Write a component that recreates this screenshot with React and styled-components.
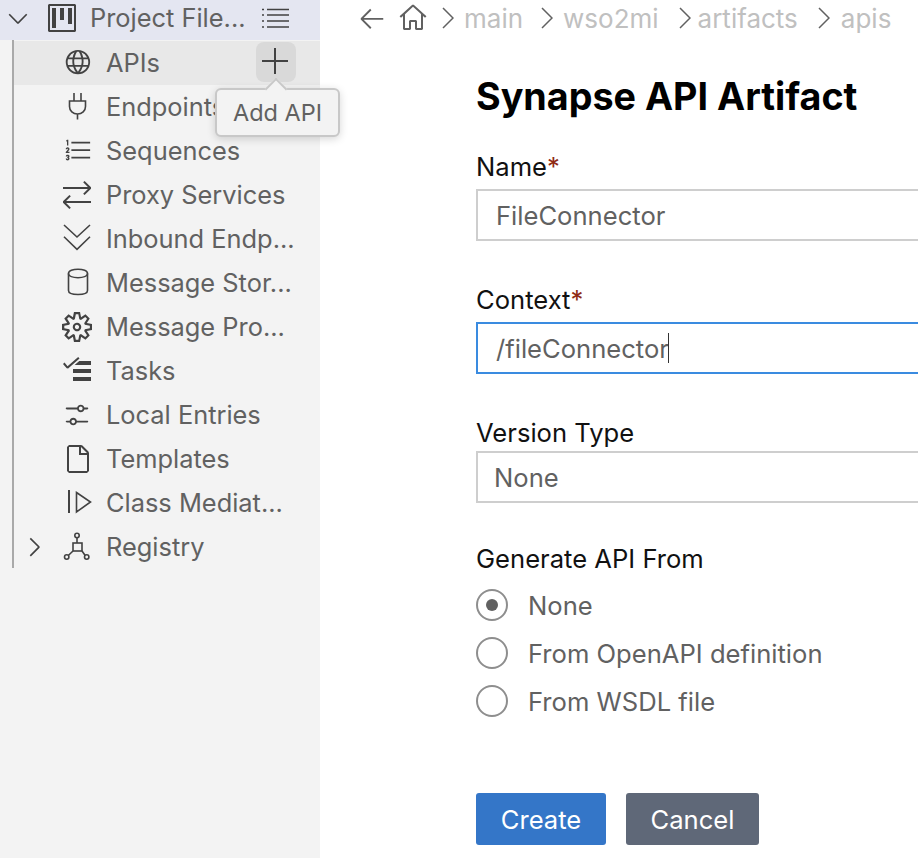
import React from 'react';
import styled, { createGlobalStyle } from 'styled-components';
import {
  VscChevronDown, VscChevronRight, VscProject, VscGlobe, VscListOrdered, VscArrowSwap,
  VscSettingsGear, VscTasklist, VscSettings, VscFile, VscAdd, VscHome, VscArrowLeft,
} from 'react-icons/vsc';

const Global = createGlobalStyle`
  html, body { margin: 0; padding: 0; background: #fff; }
  body { font-family: Inter, "Liberation Sans", sans-serif; width: 918px; height: 858px; overflow: hidden; }
  * { box-sizing: border-box; }
`;

const Page = styled.div`display: flex; width: 918px; height: 858px; overflow: hidden; position: relative;`;
const Sidebar = styled.aside`width: 320px; flex: none; background: #f3f3f3; color: #616161; font-size: 25.4px; position: relative;`;
const Header = styled.div`display: flex; align-items: center; height: 40px; background: #e4e6f1; padding: 0 0 4px 3px;`;
const HeaderTitle = styled.span`margin-left: 12px; width: 170px; white-space: nowrap; padding-bottom: 2px;`;
const Tree = styled.div`margin-left: 12px; padding-top: 1px; border-left: 2px solid #a9a9a9; height: 528px;`;
const Row = styled.div`
  display: flex; align-items: center; height: 44px; padding-left: ${p => p.$indent ?? 48}px;
  background: ${p => p.$active ? '#e8e8e8' : 'transparent'}; position: relative;
`;
const IconBox = styled.span`
  width: ${p => p.$size || 30}px; height: ${p => p.$size || 30}px; margin-left: ${p => p.$ml || 0}px;
  display: flex; align-items: center; justify-content: center; color: #424242; flex: none;
  & > svg { flex: none; }
`;
const Label = styled.span`margin-left: 15px; white-space: nowrap; position: relative; left: -1px; top: -1px;`;
const PlusBtn = styled.span`
  position: absolute; left: 242px; top: 1px; width: 40px; height: 40px; border-radius: 8px;
  background: #d9d9d9; display: flex; align-items: center; justify-content: center; color: #424242;
`;
const Tooltip = styled.div`
  position: absolute; left: 215px; top: 88px; width: 125px; height: 49px; background: #f3f3f3;
  border: 2px solid #c8c8c8; border-radius: 6px; box-shadow: 0 2px 8px rgba(0,0,0,.16);
  color: #616161; font-size: 23.5px; display: flex; align-items: center; justify-content: center; z-index: 3;
  &::before {
    content: ''; position: absolute; left: 51px; top: -9px; width: 14px; height: 14px; background: #f3f3f3;
    border-left: 2px solid #c8c8c8; border-top: 2px solid #c8c8c8; transform: rotate(45deg);
  }
`;
const Main = styled.main`flex: 1; min-width: 0; overflow: hidden;`;
const Crumbs = styled.nav`display: flex; align-items: center; height: 36px; padding-left: 37px; color: #c0c0c0; font-size: 26px; white-space: nowrap;`;
const CrumbIcon = styled.span`display: flex; color: #616161; margin-left: ${p => p.$ml || 0}px;`;
const Sep = styled.svg`flex: none; width: 12px; height: 24px; margin: 0 ${p => p.$after}px 0 ${p => p.$before}px; fill: none; stroke: #616161; stroke-width: 1.5;`;
const Form = styled.form`width: 600px; padding: 39px 0 0 156px;`;
const Title = styled.h1`margin: 0 0 35px; font-size: 37.7px; line-height: 42px; font-weight: 700; color: #000; white-space: nowrap;`;
const Field = styled.div`margin-bottom: ${p => p.$mb}px;`;
const FieldLabel = styled.label`display: block; font-size: 25.6px; line-height: 30px; color: #111; margin-bottom: ${p => p.$mb ?? 7}px;`;
const Star = styled.span`color: #8f2a14;`;
const TextBox = styled.div`
  height: 52px; width: 460px; border: 2px solid ${p => p.$focus ? '#3a8be0' : '#cecece'};
  display: flex; align-items: center; padding-left: ${p => p.$pad || 18}px; color: #616161; font-size: 25.6px; background: #fff;
`;
const Caret = styled.span`display: inline-block; width: 1.5px; height: 30px; background: #333; margin-left: -1px;`;
const Radios = styled.div`display: flex; flex-direction: column; gap: 16px; margin-top: 15px;`;
const RadioRow = styled.div`display: flex; align-items: center; height: 32px; color: #616161; font-size: 25.6px; white-space: nowrap;`;
const Radio = styled.span`
  width: 32px; height: 32px; border-radius: 50%; border: 2px solid #8e8e8e; margin-right: 20px; display: flex;
  align-items: center; justify-content: center; flex: none;
  &::after { content: ''; width: 12px; height: 12px; border-radius: 50%; background: ${p => p.$on ? '#616161' : 'transparent'}; }
`;
const Actions = styled.div`display: flex; gap: 20px; margin-top: 76px;`;
const Button = styled.button`
  height: 52px; width: ${p => p.$w}px; border: 0; border-radius: 3px; background: ${p => p.$bg}; color: #fff;
  font: 400 25.6px Inter, sans-serif; padding: 0;
`;

const Glyph = ({ children }) => (
  <svg width="30" height="30" viewBox="0 0 30 30" fill="none" stroke="#424242" strokeWidth="1.6">{children}</svg>
);
const Chevrons = () => <Glyph><path d="M2 1l13 12 13-12M2 12.700l13 12.600 13-12.600" /></Glyph>;
const Cyl = () => (
  <Glyph><path d="M6.500 5.500C6.500 2.800 11 1.200 16 1.200s9.500 1.600 9.500 4.300v17c0 2.600-4.500 4-9.500 4s-9.500-1.400-9.500-4z" /><path d="M6.500 5.500c0 2.700 4.500 4.200 9.500 4.200s9.500-1.500 9.500-4.200" /></Glyph>
);
const Plug = () => (
  <Glyph><path d="M12 1v8M19 1v8" /><path d="M7.500 9h16v5.500c0 4.500-3.500 7.500-8 7.500s-8-3-8-7.500zM15.500 22v5.500" /></Glyph>
);
const ClassMed = () => (
  <Glyph><path d="M7 2v23" strokeWidth="2" /><path d="M14.500 4.500L28.500 14l-14 10z" /></Glyph>
);
const Hierarchy = () => (
  <Glyph>
    <circle cx="15" cy="3.500" r="2.200" /><rect x="11" y="11" width="9" height="8" />
    <circle cx="4.700" cy="25" r="2.200" /><circle cx="24.700" cy="25" r="2.200" />
    <path d="M15 5.700V11M11 19l-4.700 4.500M20 19l3.200 4.500" />
  </Glyph>
);
const ListTree = () => (
  <svg width="30" height="30" viewBox="0 0 30 30" stroke="#424242" strokeWidth="1.6" fill="none">
    <path d="M7 6.500h22M7 12h22M7 18h22M7 24h22" />
    <path d="M2 6.500h2M2 12h2M2 18h2M2 24h2" />
  </svg>
);
const Chevron = () => <path d="M1 2l10 10L1 22" />;

const items = [
  ['Endpoints', <Plug />], ['Sequences', <VscListOrdered size={30} />], ['Proxy Services', <VscArrowSwap size={32} />],
  ['Inbound Endp...', <Chevrons />], ['Message Stor...', <Cyl />], ['Message Pro...', <VscSettingsGear size={30} />],
  ['Tasks', <VscTasklist size={32} />], ['Local Entries', <VscSettings size={30} />], ['Templates', <VscFile size={32} />], ['Class Mediat...', <ClassMed />],
];

export default function App() {
  return (
    <Page>
      <Global />
      <Sidebar>
        <Header>
          <IconBox><VscChevronDown size={30} /></IconBox>
          <IconBox $size={32} $ml={13}><VscProject size={32} /></IconBox>
          <HeaderTitle>Project File...</HeaderTitle>
          <IconBox><ListTree /></IconBox>
        </Header>
        <Tree>
          <Row $active><IconBox><VscGlobe size={30} /></IconBox><Label>APIs</Label><PlusBtn><VscAdd size={32} /></PlusBtn></Row>
          {items.map(([t, i]) => <Row key={t}><IconBox>{i}</IconBox><Label>{t}</Label></Row>)}
          <Row $indent={5}><IconBox><VscChevronRight size={30} /></IconBox><IconBox $ml={13}><Hierarchy /></IconBox><Label>Registry</Label></Row>
        </Tree>
      </Sidebar>
      <Tooltip>Add API</Tooltip>
      <Main>
        <Crumbs>
          <CrumbIcon><VscArrowLeft size={30} /></CrumbIcon>
          <CrumbIcon $ml={10}><VscHome size={32} /></CrumbIcon>
          <Sep viewBox="0 0 12 24" $before={13} $after={10}><Chevron /></Sep><span>main</span>
          <Sep viewBox="0 0 12 24" $before={18} $after={10}><Chevron /></Sep><span>wso2mi</span>
          <Sep viewBox="0 0 12 24" $before={20} $after={7}><Chevron /></Sep><span>artifacts</span>
          <Sep viewBox="0 0 12 24" $before={20} $after={11}><Chevron /></Sep><span>apis</span>
        </Crumbs>
        <Form>
          <Title>Synapse API Artifact</Title>
          <Field $mb={44}><FieldLabel>Name<Star>*</Star></FieldLabel><TextBox>FileConnector</TextBox></Field>
          <Field $mb={44}><FieldLabel>Context<Star>*</Star></FieldLabel><TextBox $focus>/fileConnector<Caret /></TextBox></Field>
          <Field $mb={41}><FieldLabel $mb={3}>Version Type</FieldLabel><TextBox $pad={16}>None</TextBox></Field>
          <FieldLabel>Generate API From</FieldLabel>
          <Radios>
            <RadioRow><Radio $on />None</RadioRow>
            <RadioRow><Radio />From OpenAPI definition</RadioRow>
            <RadioRow><Radio />From WSDL file</RadioRow>
          </Radios>
          <Actions><Button $w={130} $bg="#3476c8">Create</Button><Button $w={133} $bg="#5f6878">Cancel</Button></Actions>
        </Form>
      </Main>
    </Page>
  );
}
